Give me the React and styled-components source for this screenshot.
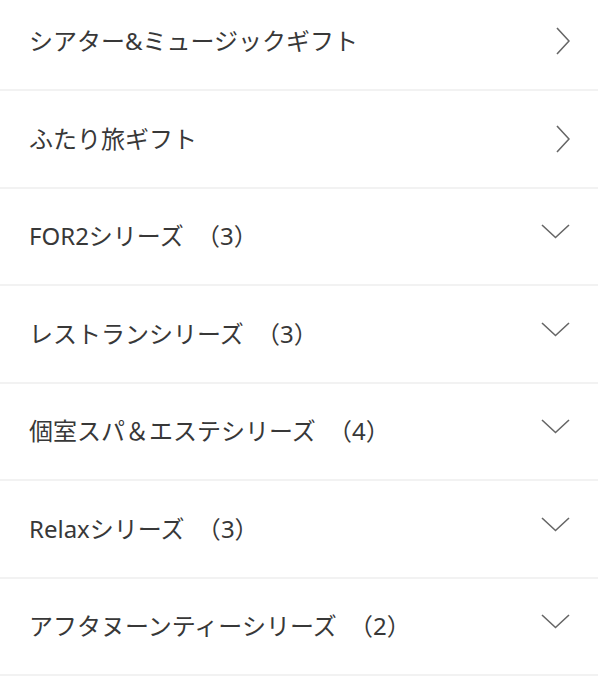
import React from "react";
import styled, { createGlobalStyle } from "styled-components";

const GlobalStyle = createGlobalStyle`
  html, body {
    margin: 0;
    padding: 0;
    background: #fff;
    overflow: hidden;
  }
  body {
    font-family: "Noto Sans", "Noto Sans CJK JP", sans-serif;
    color: #333;
  }
`;

const MenuList = styled.ul`
  list-style: none;
  margin: -6.5px 0 0;
  padding: 0;
`;

const MenuRow = styled.li`
  display: flex;
  justify-content: space-between;
  align-items: center;
  box-sizing: border-box;
  height: 97.5px;
  padding: 0 28px 0 29px;
  border-bottom: 2px solid #f2f2f2;
  cursor: pointer;
`;

const Label = styled.span`
  font-size: 24px;
  font-weight: 400;
  line-height: 1.4;
  color: #383838;
  white-space: nowrap;
`;

const Count = styled.span`
  margin-left: 6px;
`;

const Chevron = styled.span`
  display: flex;
  align-items: center;
  justify-content: flex-end;
  width: 30px;
  margin-top: ${(p) => (p.$down ? "-9px" : "0")};

  svg {
    display: block;
  }
`;

const ArrowRight = () => (
  <svg width="14" height="28" viewBox="0 0 14 28">
    <polyline
      points="1,1 13,14 1,27"
      fill="none"
      stroke="#666"
      strokeWidth="1.6"
    />
  </svg>
);

const ArrowDown = () => (
  <svg width="29" height="15" viewBox="0 0 29 15">
    <polyline
      points="1,1 14.5,13.5 28,1"
      fill="none"
      stroke="#666"
      strokeWidth="1.6"
    />
  </svg>
);

const items = [
  { label: "シアター&ミュージックギフト" },
  { label: "ふたり旅ギフト" },
  { label: "FOR2シリーズ", count: 3 },
  { label: "レストランシリーズ", count: 3 },
  { label: "個室スパ＆エステシリーズ", count: 4 },
  { label: "Relaxシリーズ", count: 3 },
  { label: "アフタヌーンティーシリーズ", count: 2 },
];

export default function App() {
  return (
    <>
      <GlobalStyle />
      <MenuList>
        {items.map((item) => {
          const isToggle = item.count != null;
          return (
            <MenuRow key={item.label}>
              <Label>
                {item.label}
                {isToggle && <Count> （{item.count}）</Count>}
              </Label>
              <Chevron $down={isToggle}>
                {isToggle ? <ArrowDown /> : <ArrowRight />}
              </Chevron>
            </MenuRow>
          );
        })}
      </MenuList>
    </>
  );
}
